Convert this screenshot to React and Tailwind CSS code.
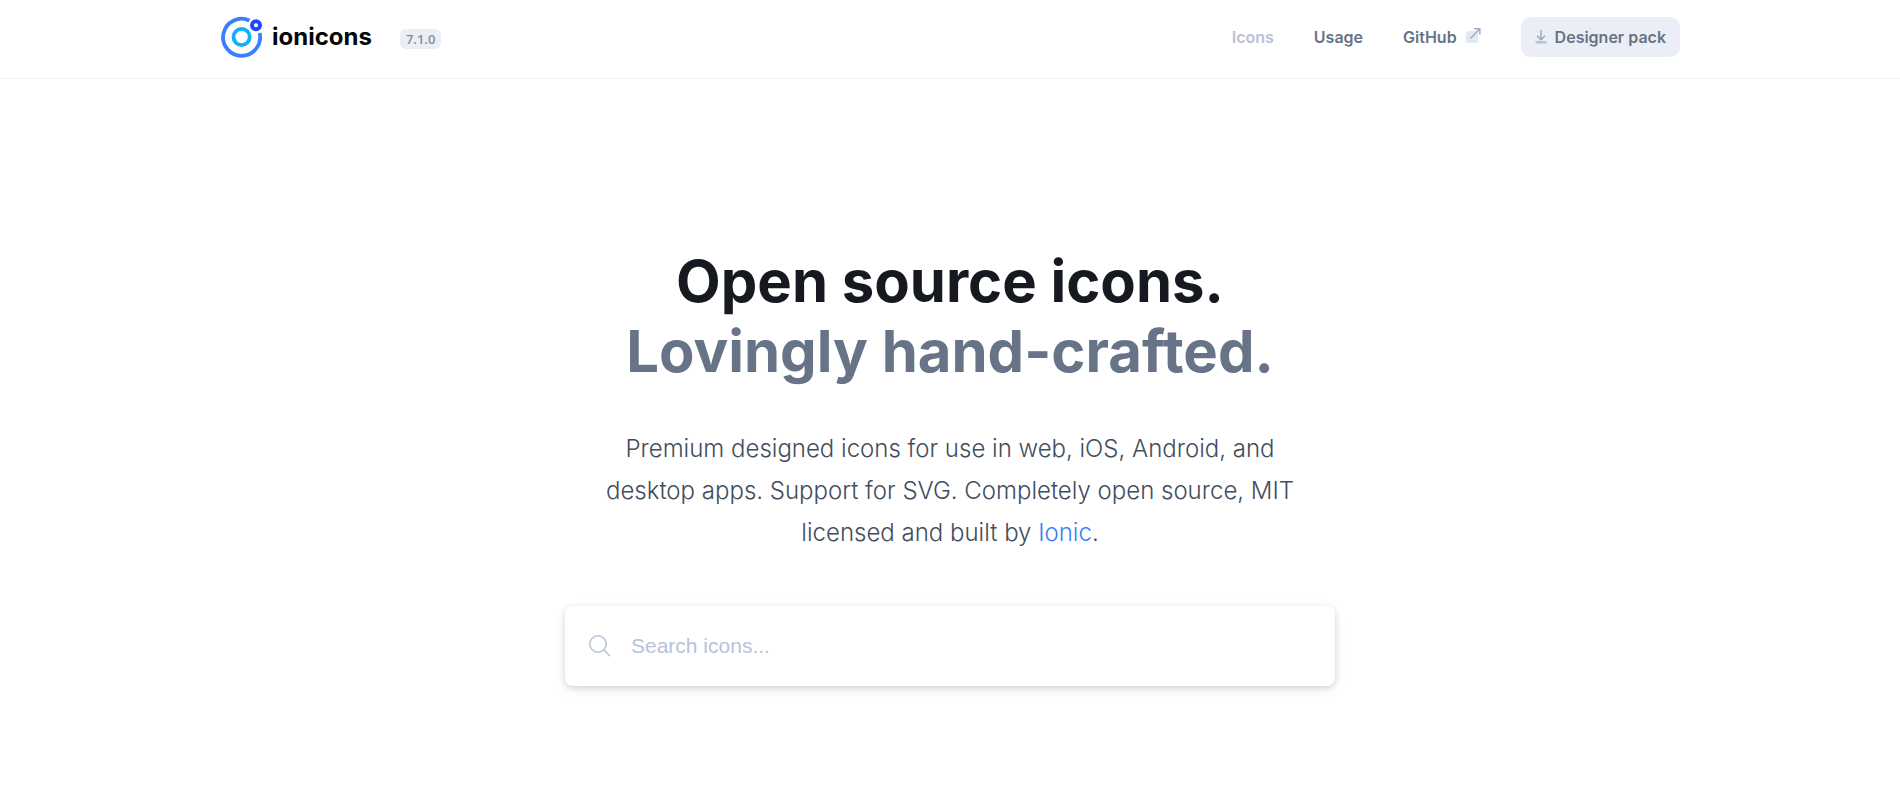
function Logo() {
  return (
    <a href="#home" className="flex items-center gap-[10px]" aria-label="ionicons">
      <svg className="size-[42px]" viewBox="0 0 42 42" fill="none" aria-hidden="true">
        <path d="M29.4 4.5A18.5 18.5 0 1 0 39.6 17" stroke="#3880ff" strokeWidth="3.8" />
        <circle cx="21.6" cy="21" r="8.1" stroke="#0fb0ff" strokeWidth="3.8" />
        <circle cx="36" cy="9.3" r="4" stroke="#1f47ff" strokeWidth="3.9" />
      </svg>
      <span className="text-2xl leading-8 font-bold text-[#03060b]">ionicons</span>
    </a>
  );
}

function ExternalIcon() {
  return (
    <svg className="mb-1 size-4" viewBox="0 0 16 16" fill="none" aria-hidden="true">
      <rect x="1" y="4" width="12" height="12" rx="2" fill="#e3e8f2" />
      <path d="M5.5 11.5 14.5 2M9 1.8h5.8v5.7" stroke="#a3aec4" strokeWidth="1.6" />
    </svg>
  );
}

function DownloadIcon() {
  return (
    <svg className="h-[14px] w-3" viewBox="0 0 12 14" fill="none" aria-hidden="true">
      <path d="M6 0v9.5M2 5.8l4 4 4-4" stroke="#92a0b9" strokeWidth="1.3" />
      <rect x="0.5" y="11" width="11" height="2.4" rx="0.6" fill="#b7c2d6" />
    </svg>
  );
}

function Header() {
  return (
    <header className="border-b border-[#f0f1f3] px-5">
      <div className="mx-auto flex max-w-[1460px] items-center justify-between pt-4 pb-5">
        <div className="flex items-center gap-7">
          <Logo />
          <span className="mt-1 rounded-md bg-[#ebeef6] px-[6px] font-['Open_Sans',sans-serif] text-[13px] leading-5 font-semibold text-[#848c9b]">
            7.1.0
          </span>
        </div>
        <nav className="flex items-center gap-10 text-base font-semibold text-[#677384]">
          <a href="#icons" className="text-[#b8c1d6]">Icons</a>
          <a href="#usage">Usage</a>
          <a href="#github" className="flex items-center gap-2">
            GitHub
            <ExternalIcon />
          </a>
          <a href="#designer-pack" className="flex h-10 items-center gap-2 rounded-[10px] bg-[#ebeef6] px-[14px]">
            <DownloadIcon />
            Designer pack
          </a>
        </nav>
      </div>
    </header>
  );
}

function SearchBox() {
  return (
    <label className="mt-[52px] flex h-20 w-full max-w-[770px] items-center gap-5 rounded-lg bg-white px-6 shadow-[0_2px_6px_rgba(0,0,0,0.15),0_4px_16px_rgba(0,0,0,0.05)]">
      <svg className="size-[22px] shrink-0" viewBox="0 0 22 22" fill="none" stroke="#b8c3d6" strokeWidth="1.5" aria-hidden="true">
        <circle cx="9" cy="9" r="8.2" />
        <path d="m14.8 14.8 6.4 6.4" />
      </svg>
      <input
        type="search"
        aria-label="Search icons"
        placeholder="Search icons..."
        className="h-full w-full min-w-0 bg-transparent font-['Liberation_Sans',sans-serif] text-[21px] text-[#414d5c] outline-none placeholder:text-[#b8c3d9]"
      />
    </label>
  );
}

export default function App() {
  return (
    <div className="bg-white font-[Inter,sans-serif]">
      <Header />
      <main className="flex flex-col items-center px-5 pt-[167px] pb-28 text-center">
        <h1 className="text-[58px] leading-[70px] font-bold text-[#16191f]">
          Open source icons.
          <span className="block text-[#677487]">Lovingly hand-crafted.</span>
        </h1>
        <p className="mt-[42px] max-w-[720px] text-2xl leading-[42px] font-light text-[#414d5c]">
          Premium designed icons for use in web, iOS, Android, and desktop apps. Support for SVG. Completely open
          source, MIT licensed and built by <a href="#ionic" className="text-[#3880ff]">Ionic</a>.
        </p>
        <SearchBox />
      </main>
    </div>
  );
}
